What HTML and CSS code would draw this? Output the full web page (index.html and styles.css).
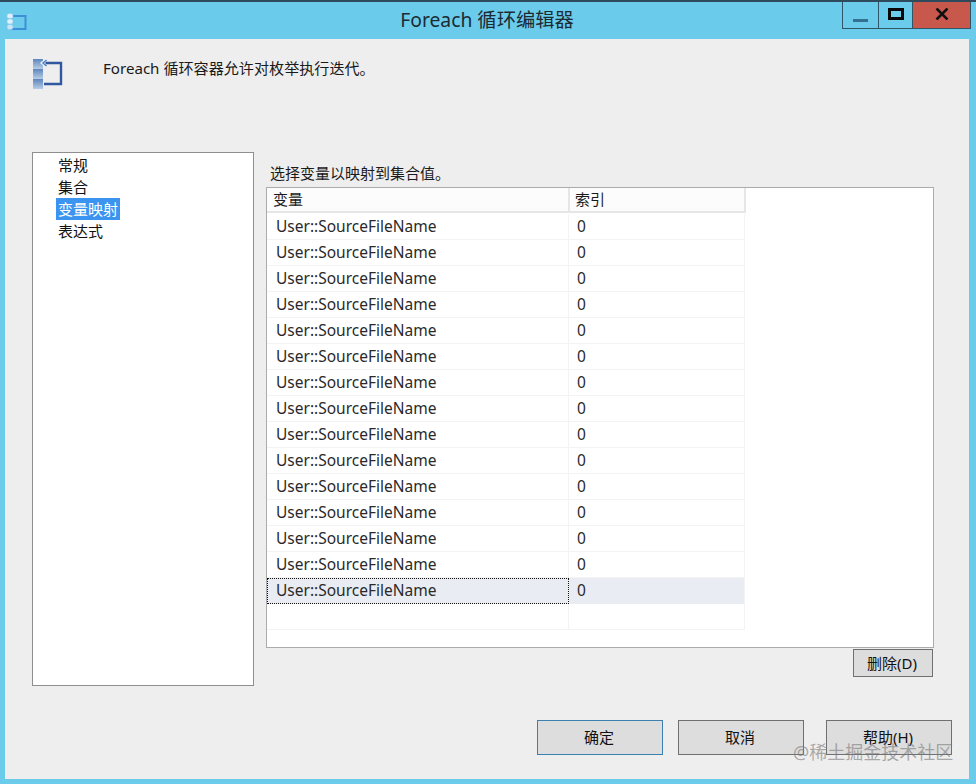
FILE: index.html
```html
<!DOCTYPE html>
<html lang="zh">
<head>
<meta charset="utf-8">
<title>Foreach 循环编辑器</title>
<link rel="stylesheet" href="styles.css">
</head>
<body>
<div class="window">
  <header class="titlebar">
    <svg class="app-icon" width="24" height="22" viewBox="0 0 24 22">
      <path d="M6 5H20.500V18H6" fill="none" stroke="#3f8fd6" stroke-width="2"/>
      <rect x="2" y="2.500" width="6" height="5" rx="2" fill="#dff1fb" stroke="#8cc4ea" stroke-width="0.600"/>
      <rect x="2" y="8" width="6" height="5" rx="2" fill="#dff1fb" stroke="#8cc4ea" stroke-width="0.600"/>
      <rect x="2" y="13.500" width="6" height="5" rx="2" fill="#c8e6f8" stroke="#8cc4ea" stroke-width="0.600"/>
    </svg>
    <h1 class="title">Foreach 循环编辑器</h1>
    <div class="controls">
      <div class="ctl ctl-min"><span class="min-bar"></span></div>
      <div class="ctl ctl-max"><span class="max-box"></span></div>
      <div class="ctl ctl-close">
        <svg width="14" height="12" viewBox="0 0 14 12"><path d="M1.500 0.500L12.500 11.500M12.500 0.500L1.500 11.500" stroke="#111" stroke-width="2.600" fill="none"/></svg>
      </div>
    </div>
  </header>
  <main class="client">
    <section class="intro">
      <svg class="intro-icon" width="32" height="32" viewBox="0 0 32 32">
        <defs>
          <linearGradient id="cell" x1="0" y1="0" x2="0" y2="1">
            <stop offset="0" stop-color="#5d86bd"/>
            <stop offset="1" stop-color="#b6cde6"/>
          </linearGradient>
        </defs>
        <rect x="0" y="0" width="10" height="10" fill="url(#cell)"/>
        <rect x="0" y="10" width="10" height="10" fill="url(#cell)"/>
        <rect x="0" y="20" width="10" height="10" fill="url(#cell)"/>
        <path d="M11 4H28V25H11" fill="none" stroke="#30589f" stroke-width="2.400"/>
        <path d="M7 4L12.500 -0.500V8.500Z" fill="#f4f8fc"/>
        <path d="M13.500 1L10 4L13.500 7" fill="none" stroke="#4f7fc4" stroke-width="1.500"/>
      </svg>
      <p class="intro-text">Foreach 循环容器允许对枚举执行迭代。</p>
    </section>
    <section class="content">
      <ul class="nav">
        <li class="nav-item">常规</li>
        <li class="nav-item">集合</li>
        <li class="nav-item"><span class="nav-selected">变量映射</span></li>
        <li class="nav-item">表达式</li>
      </ul>
      <div class="panel">
        <div class="panel-label">选择变量以映射到集合值。</div>
        <div class="grid-box">
          <div class="grid">
            <div class="head">变量</div><div class="head">索引</div>
            <div class="cell name">User::SourceFileName</div><div class="cell idx">0</div>
            <div class="cell name">User::SourceFileName</div><div class="cell idx">0</div>
            <div class="cell name">User::SourceFileName</div><div class="cell idx">0</div>
            <div class="cell name">User::SourceFileName</div><div class="cell idx">0</div>
            <div class="cell name">User::SourceFileName</div><div class="cell idx">0</div>
            <div class="cell name">User::SourceFileName</div><div class="cell idx">0</div>
            <div class="cell name">User::SourceFileName</div><div class="cell idx">0</div>
            <div class="cell name">User::SourceFileName</div><div class="cell idx">0</div>
            <div class="cell name">User::SourceFileName</div><div class="cell idx">0</div>
            <div class="cell name">User::SourceFileName</div><div class="cell idx">0</div>
            <div class="cell name">User::SourceFileName</div><div class="cell idx">0</div>
            <div class="cell name">User::SourceFileName</div><div class="cell idx">0</div>
            <div class="cell name">User::SourceFileName</div><div class="cell idx">0</div>
            <div class="cell name">User::SourceFileName</div><div class="cell idx">0</div>
            <div class="cell name current focus">User::SourceFileName</div><div class="cell idx current">0</div>
            <div class="cell name"></div><div class="cell idx"></div>
          </div>
        </div>
        <div class="panel-actions">
          <button class="btn btn-small" type="button">删除(D)</button>
        </div>
      </div>
    </section>
    <footer class="footer">
      <button class="btn btn-large btn-default" type="button">确定</button>
      <button class="btn btn-large btn-cancel" type="button">取消</button>
      <button class="btn btn-large" type="button">帮助(H)</button>
    </footer>
  </main>
  <div class="watermark">@稀土掘金技术社区</div>
</div>
</body>
</html>
```
FILE: styles.css
```css
* { box-sizing: border-box; }
html, body { margin: 0; padding: 0; }
body {
  width: 976px;
  height: 784px;
  overflow: hidden;
  background: #6bcbea;
  font-family: "Noto Sans", "Noto Sans CJK SC", sans-serif;
  color: #1a1a1a;
}
.window {
  position: relative;
  width: 976px;
  height: 784px;
  display: flex;
  flex-direction: column;
  border-top: 2px solid #2f4a5c;
  background: #6bcbea;
}
.titlebar {
  height: 37px;
  flex: none;
  display: flex;
  align-items: center;
  position: relative;
  padding-left: 5px;
}
.app-icon { flex: none; margin-top: 3px; }
.title {
  position: absolute;
  left: 0;
  right: 2px;
  top: 5px;
  margin: 0;
  text-align: center;
  font-weight: 400;
  font-size: 19.300px;
  line-height: 26px;
  color: #1c2a33;
}
.controls {
  position: absolute;
  top: 0;
  left: 842px;
  display: flex;
  height: 27px;
  border: 1px solid #2e5568;
  border-top: 0;
}
.ctl {
  display: flex;
  align-items: center;
  justify-content: center;
}
.ctl-min {
  width: 36px;
  border-right: 1px solid #2e5568;
  align-items: flex-end;
  padding-bottom: 6px;
}
.min-bar { width: 15px; height: 3px; background: #34708f; }
.ctl-max { width: 34px; border-right: 1px solid #2e5568; }
.max-box {
  width: 16px;
  height: 12px;
  border: 3px solid #080808;
  margin-bottom: 3px;
}
.ctl-close { width: 57px; background: #c9584c; padding-bottom: 2px; }
.client {
  margin: 0 7px 5px 5px;
  flex: 1;
  min-height: 0;
  background: #eeeeee;
  display: flex;
  flex-direction: column;
  position: relative;
}
.intro {
  height: 113px;
  flex: none;
  display: flex;
  align-items: flex-start;
  padding: 20px 0 0 28px;
}
.intro-icon { flex: none; overflow: visible; }
.intro-text {
  margin: 0 0 0 38px;
  font-size: 15.100px;
  line-height: 19px;
}
.content {
  display: flex;
  align-items: flex-start;
  padding-left: 27px;
  gap: 12px;
  height: 534px;
  flex: none;
}
.nav {
  list-style: none;
  margin: 0;
  padding: 1px 0 0 25px;
  width: 222px;
  height: 534px;
  flex: none;
  background: #fff;
  border: 1px solid #8e8e8e;
  font-size: 15px;
}
.nav-item { height: 22px; line-height: 22px; color: #111; }
.nav-selected {
  display: inline-block;
  background: #3b94f0;
  color: #fff;
  height: 22px;
  padding-left: 2px;
  width: 64px;
  margin-left: -2px;
}
.panel { width: 668px; display: flex; flex-direction: column; }
.panel-label {
  height: 35px;
  padding: 11px 0 0 4px;
  font-size: 15px;
  line-height: 20px;
}
.grid-box {
  height: 461px;
  background: #fff;
  border: 1px solid #ababab;
}
.grid {
  display: grid;
  grid-template-columns: 302px 176px;
  grid-auto-rows: 26px;
  width: 478px;
}
.head {
  height: 25px;
  background: #fcfcfc;
  border-right: 2px solid #e6e6e6;
  border-bottom: 2px solid #e6e6e6;
  padding-left: 6px;
  font-size: 15px;
  line-height: 23px;
}
.head:first-child { margin-right: -1px; }
.head + .head { margin: 0 -1px 0 1px; padding-left: 5px; }
.cell {
  background: #fff;
  border-right: 1px solid #f3f3f3;
  border-bottom: 1px solid #f3f3f3;
  font-size: 15.500px;
  line-height: 25px;
  color: #2a2a2a;
}
.name { padding-left: 9px; }
.idx { padding-left: 8px; }
.current { background: #e9ecf2; border-bottom-color: #e9ecf2; }
.focus { outline: 1px dotted #111; outline-offset: -1px; }
.panel-actions { display: flex; justify-content: flex-end; padding: 1px 1px 0 0; }
.btn {
  font-family: inherit;
  color: #111;
  background: #dddddd;
  border: 1px solid #707070;
  padding: 0 2px 2px 0;
  display: block;
}
.btn-small { width: 80px; height: 28px; font-size: 15px; }
.footer {
  display: flex;
  gap: 15px;
  padding: 34px 0 0 532px;
}
.btn-large { width: 126px; height: 35px; font-size: 15px; }
.btn-default { border-color: #3c7fb1; }
.btn-cancel { margin-right: 7px; }
.watermark {
  position: absolute;
  left: 793px;
  top: 738px;
  font-size: 18px;
  line-height: 24px;
  color: rgba(120, 120, 120, 0.6);
  white-space: nowrap;
}
```
